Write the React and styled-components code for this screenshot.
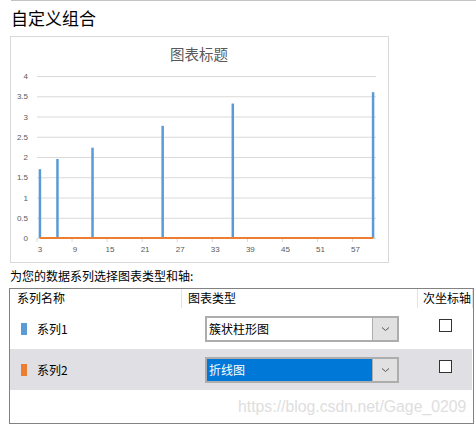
import React from "react";
import styled, { createGlobalStyle } from "styled-components";

const GlobalStyle = createGlobalStyle`
  html, body { margin: 0; padding: 0; background: #ffffff; }
  body { font-family: "Noto Sans CJK SC", "Noto Sans", sans-serif; color: #000; }
`;

const Page = styled.div`
  position: relative;
  width: 476px;
  height: 427px;
  overflow: hidden;
  background: #fff;
`;

const TopRule = styled.div`
  margin-left: 11px;
  height: 1px;
  background: #c4c4c4;
`;

const Heading = styled.h1`
  margin: 5px 0 0 11px;
  font-size: 17px;
  font-weight: 400;
  line-height: 24px;
`;

const ChartBox = styled.div`
  margin: 6px 0 0 10px;
  width: 379px;
  height: 227px;
  box-sizing: border-box;
  border: 1px solid #d9d9d9;
  background: #fff;
`;

const Prompt = styled.div`
  margin: 4px 0 0 10px;
  font-size: 12px;
  line-height: 17px;
`;

const Table = styled.div`
  margin: 4px 0 0 9px;
  width: 465px;
  height: 136px;
  box-sizing: border-box;
  border: 1px solid #828282;
  display: flex;
  flex-direction: column;
`;

const cols = "172px 236px 55px";

const HeaderRow = styled.div`
  display: grid;
  grid-template-columns: ${cols};
  height: 19px;
`;

const HeaderCell = styled.div`
  border-right: 1px solid #e3e3e3;
  padding-left: ${(p) => p.$pad}px;
  font-size: 12px;
  line-height: 18px;
  white-space: nowrap;
  overflow: hidden;
`;

const Row = styled.div`
  display: grid;
  grid-template-columns: ${cols};
  height: 41px;
  margin: 0 1px 0 0;
  background: ${(p) => (p.$selected ? "#e0e0e4" : "transparent")};
`;

const NameCell = styled.div`
  display: flex;
  align-items: center;
  padding-left: 11px;
  gap: 10px;
  font-size: 12px;
`;

const Swatch = styled.span`
  width: 6px;
  height: 12px;
  background: ${(p) => p.$color};
`;

const TypeCell = styled.div`
  display: flex;
  align-items: center;
  padding-left: 23px;
`;

const Select = styled.div`
  width: 194px;
  height: 26px;
  box-sizing: border-box;
  border: 2px solid #adadad;
  display: flex;
  background: #fff;
`;

const SelectValue = styled.div`
  flex: 1;
  padding-left: 2px;
  font-size: 12px;
  line-height: 22px;
  background: ${(p) => (p.$active ? "#0078d7" : "#fff")};
  color: ${(p) => (p.$active ? "#fff" : "#000")};
`;

const SelectButton = styled.div`
  width: 24px;
  border-left: 1px solid #adadad;
  background: #e1e1e1;
  display: flex;
  align-items: center;
  justify-content: center;
`;

const AxisCell = styled.div`
  display: flex;
  justify-content: center;
  align-items: flex-start;
  padding-top: 11px;
`;

const Checkbox = styled.span`
  width: 13px;
  height: 13px;
  box-sizing: border-box;
  border: 1px solid #333;
  background: #fff;
`;

const Watermark = styled.div`
  position: absolute;
  left: 238px;
  top: 397px;
  font-family: "Liberation Sans", Arial, sans-serif;
  font-size: 15.8px;
  line-height: 20px;
  color: #dedede;
  white-space: nowrap;
`;

const Chevron = () => (
  <svg width="9" height="6" viewBox="0 0 9 6">
    <path d="M1 1.5 L4.5 4.5 L8 1.5" fill="none" stroke="#555" strokeWidth="1" />
  </svg>
);

const CW = 339 / 58;
const cx = (c) => 26 + (c - 3 + 0.5) * CW;
const vy = (v) => 201 - v * 40.5;

const bars = [
  [3, 1.7],
  [6, 1.95],
  [12, 2.23],
  [24, 2.77],
  [36, 3.32],
  [60, 3.6],
];

const yVals = [0, 0.5, 1, 1.5, 2, 2.5, 3, 3.5, 4];
const xLabels = [3, 9, 15, 21, 27, 33, 39, 45, 51, 57];

const Chart = () => (
  <svg width="377" height="225" viewBox="0 0 377 225">
    <text
      x="188"
      y="22.5"
      textAnchor="middle"
      fontSize="14.5"
      fill="#595959"
      fontFamily='"Noto Sans CJK SC", sans-serif'
    >
      图表标题
    </text>
    {yVals.map((v) => (
      <g key={v}>
        <line x1="26" x2="365" y1={vy(v) + 0.5} y2={vy(v) + 0.5} stroke="#d9d9d9" strokeWidth="1" />
        <text
          x="17"
          y={vy(v) + 3}
          textAnchor="end"
          fontSize="8"
          fill="#595959"
          fontFamily='"Liberation Sans", Arial, sans-serif'
        >
          {v}
        </text>
      </g>
    ))}
    {xLabels.map((c) => (
      <g key={c}>
        <line x1={26 + (c - 3) * CW} x2={26 + (c - 3) * CW} y1="201" y2="205" stroke="#d9d9d9" />
        <text
          x={cx(c)}
          y="215"
          textAnchor="middle"
          fontSize="8"
          fill="#595959"
          fontFamily='"Liberation Sans", Arial, sans-serif'
        >
          {c}
        </text>
      </g>
    ))}
    {bars.map(([c, v]) => (
      <rect key={c} x={cx(c) - 1.25} y={vy(v)} width="2.5" height={v * 40.5} fill="#5b9bd5" />
    ))}
    <line x1={cx(3)} x2={cx(60)} y1="201" y2="201" stroke="#ed7d31" strokeWidth="2" />
  </svg>
);

const series = [
  { name: "系列1", color: "#5b9bd5", type: "簇状柱形图", selected: false },
  { name: "系列2", color: "#ed7d31", type: "折线图", selected: true },
];

export default function App() {
  return (
    <>
      <GlobalStyle />
      <Page>
        <TopRule />
        <Heading>自定义组合</Heading>
        <ChartBox>
          <Chart />
        </ChartBox>
        <Prompt>为您的数据系列选择图表类型和轴:</Prompt>
        <Table>
          <HeaderRow>
            <HeaderCell $pad={7}>系列名称</HeaderCell>
            <HeaderCell $pad={6}>图表类型</HeaderCell>
            <HeaderCell $pad={5}>次坐标轴</HeaderCell>
          </HeaderRow>
          {series.map((s) => (
            <Row key={s.name} $selected={s.selected}>
              <NameCell>
                <Swatch $color={s.color} />
                {s.name}
              </NameCell>
              <TypeCell>
                <Select>
                  <SelectValue $active={s.selected}>{s.type}</SelectValue>
                  <SelectButton>
                    <Chevron />
                  </SelectButton>
                </Select>
              </TypeCell>
              <AxisCell>
                <Checkbox />
              </AxisCell>
            </Row>
          ))}
        </Table>
        <Watermark>https://blog.csdn.net/Gage_0209</Watermark>
      </Page>
    </>
  );
}
